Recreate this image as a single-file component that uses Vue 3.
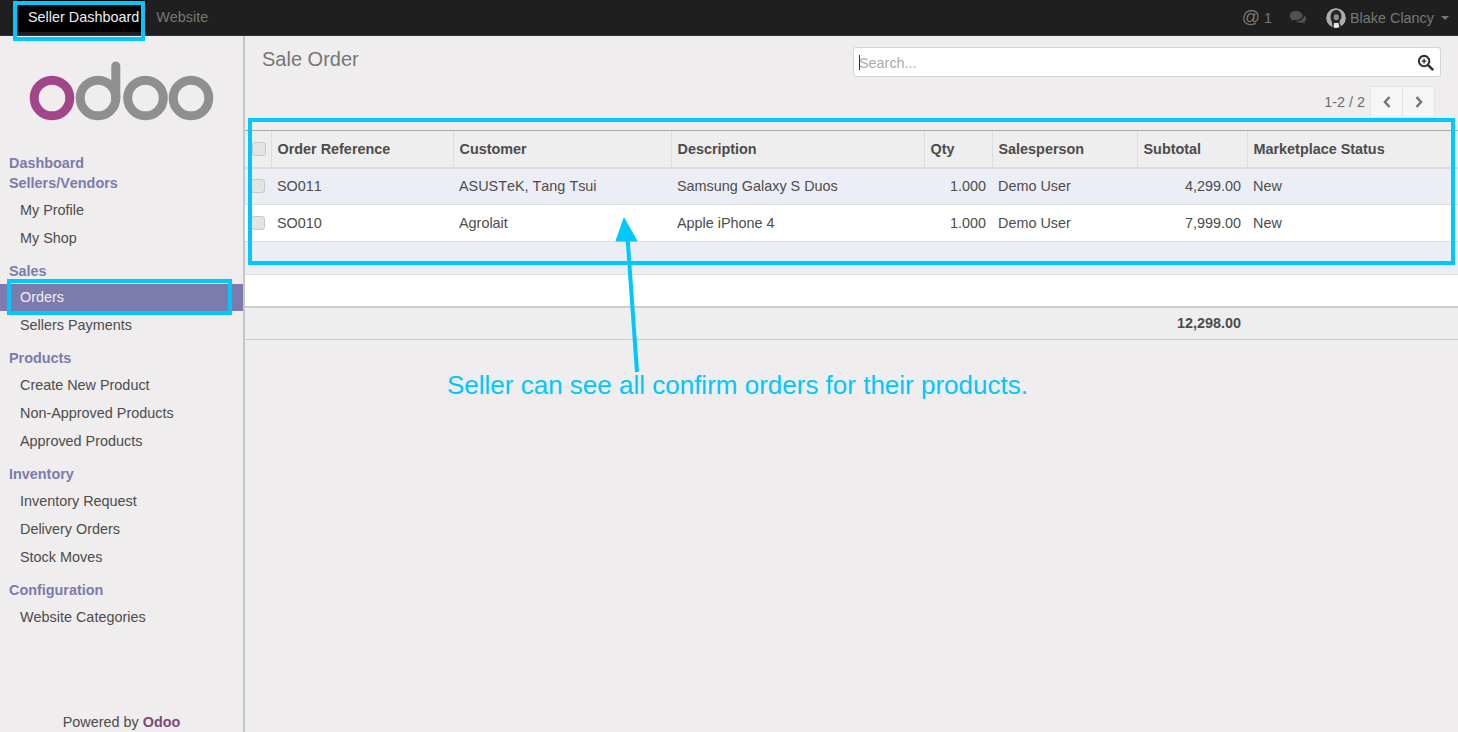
<template>
  <div class="page">
    <nav class="navbar">
      <div class="navleft">
        <a class="navitem active">Seller Dashboard</a>
        <a class="navitem">Website</a>
      </div>
      <div class="navright">
        <span class="mention"><span class="at">@</span> 1</span>
        <svg class="chat" viewBox="0 0 20 16" width="19" height="15">
          <path d="M7.500 1C3.600 1 .6 3.200.6 6c0 1.500.9 2.800 2.300 3.700-.2.800-.7 1.500-1.300 2.100 1.200-.1 2.300-.6 3.200-1.300.8.200 1.700.3 2.700.3 3.900 0 6.900-2.200 6.900-4.800S11.400 1 7.500 1z" fill="#525252"/>
          <path d="M15.700 5.200c.1.300.1.600.1.800 0 3.300-3.400 5.800-7.700 5.800h-.8c1.200 1.100 3 1.800 5 1.800.7 0 1.400-.1 2-.2.800.600 1.800 1 2.900 1.200-.5-.6-.9-1.200-1.100-1.900 1.300-.8 2.100-2 2.100-3.300 0-1.700-1-3.200-2.500-4.200z" fill="#525252"/>
        </svg>
        <span class="user">
          <svg class="avatar" viewBox="0 0 20 20" width="20" height="20">
            <circle cx="10" cy="10" r="10" fill="#a9adad"/>
            <path d="M4.500 9c0-4.500 3-7 5.800-7s5.500 2.500 5.200 7c-.2 1.500-1 2.500-1.500 3l-.5 3 2 4H6.500L6 14.500 5 12z" fill="#23262a"/>
            <ellipse cx="10.300" cy="9.300" rx="2.600" ry="3" fill="#8f8d8a"/>
            <path d="M8 15h4.500l1 5H7.500z" fill="#e8e8e8"/>
          </svg>
          Blake Clancy
          <i class="caret"></i>
        </span>
      </div>
    </nav>

    <div class="body">
      <aside class="sidebar">
        <svg class="logo" viewBox="0 0 243 90" width="243" height="90">
          <circle cx="52" cy="62" r="17.800" fill="none" stroke="#a24689" stroke-width="9"/>
          <circle cx="98" cy="62" r="17.800" fill="none" stroke="#8f8f8f" stroke-width="9"/>
          <path d="M115.800 62V30" fill="none" stroke="#8f8f8f" stroke-width="9" stroke-linecap="round"/>
          <circle cx="145.500" cy="62" r="17.800" fill="none" stroke="#8f8f8f" stroke-width="9"/>
          <circle cx="191" cy="62" r="17.800" fill="none" stroke="#8f8f8f" stroke-width="9"/>
        </svg>

        <div class="menu">
          <template v-for="group in menu" :key="group.title">
            <div class="menuhead" :class="{ tight: group.tight }">{{ group.title }}</div>
            <div
              v-for="item in group.items"
              :key="item"
              class="menuitem"
              :class="{ selected: item === 'Orders' }"
            >{{ item }}</div>
          </template>
        </div>

        <div class="powered">Powered by <b>Odoo</b></div>
      </aside>

      <main class="content">
        <div class="topbar">
          <h2 class="title">Sale Order</h2>
          <div class="controls">
            <div class="search">
              <span class="cursor"></span>
              <span class="placeholder">Search...</span>
              <svg class="lens" viewBox="0 0 18 18" width="17" height="17">
                <circle cx="7.500" cy="7.500" r="5.500" fill="none" stroke="#333" stroke-width="2.200"/>
                <path d="M11.800 11.800l4.500 4.500" stroke="#333" stroke-width="2.800" stroke-linecap="round"/>
                <path d="M5 7.500h5M7.500 5v5" stroke="#333" stroke-width="1.500"/>
              </svg>
            </div>
            <div class="pagerrow">
              <span class="pagecount">1-2 / 2</span>
              <div class="pagerbtns">
                <button class="pagerbtn">
                  <svg viewBox="0 0 10 14" width="10" height="14"><path d="M7.500 2L3 7l4.500 5" fill="none" stroke="#777" stroke-width="2.600"/></svg>
                </button>
                <button class="pagerbtn">
                  <svg viewBox="0 0 10 14" width="10" height="14"><path d="M2.500 2L7 7l-4.500 5" fill="none" stroke="#777" stroke-width="2.600"/></svg>
                </button>
              </div>
            </div>
          </div>
        </div>

        <table class="list">
          <colgroup>
            <col v-for="w in widths" :key="w" :style="{ width: w + 'px' }" />
            <col />
          </colgroup>
          <thead>
            <tr>
              <th class="check"><span class="box"></span></th>
              <th v-for="c in columns" :key="c">{{ c }}</th>
            </tr>
          </thead>
          <tbody>
            <tr v-for="o in orders" :key="o.ref" class="row">
              <td class="check"><span class="box"></span></td>
              <td>{{ o.ref }}</td>
              <td>{{ o.customer }}</td>
              <td>{{ o.description }}</td>
              <td class="num">{{ o.qty }}</td>
              <td>{{ o.salesperson }}</td>
              <td class="num">{{ o.subtotal }}</td>
              <td>{{ o.status }}</td>
            </tr>
            <tr class="blank"><td colspan="8"></td></tr>
            <tr class="blank white"><td colspan="8"></td></tr>
          </tbody>
          <tfoot>
            <tr>
              <td colspan="6"></td>
              <td class="num total">12,298.00</td>
              <td></td>
            </tr>
          </tfoot>
        </table>
      </main>
    </div>

    <!-- annotations drawn on top of the screenshot -->
    <div class="mark markbrand"></div>
    <div class="mark markorders"></div>
    <div class="mark marktable"></div>
    <svg class="arrow" viewBox="0 0 40 170" width="40" height="170">
      <path d="M6 31L14 8l13 23z" fill="#00c8ff" stroke="#00c8ff" stroke-width="1"/>
      <path d="M17.700 30L27 162" fill="none" stroke="#00c8ff" stroke-width="4"/>
    </svg>
    <div class="note">Seller can see all confirm orders for their products.</div>
  </div>
</template>

<script setup>
const menu = [
  { title: 'Dashboard', items: [], tight: true },
  { title: 'Sellers/Vendors', items: ['My Profile', 'My Shop'], tight: true },
  { title: 'Sales', items: ['Orders', 'Sellers Payments'] },
  { title: 'Products', items: ['Create New Product', 'Non-Approved Products', 'Approved Products'] },
  { title: 'Inventory', items: ['Inventory Request', 'Delivery Orders', 'Stock Moves'] },
  { title: 'Configuration', items: ['Website Categories'] }
]

const widths = [26, 182, 218, 253, 68, 145, 110]
const columns = ['Order Reference', 'Customer', 'Description', 'Qty', 'Salesperson', 'Subtotal', 'Marketplace Status']

const orders = [
  { ref: 'SO011', customer: 'ASUSTeK, Tang Tsui', description: 'Samsung Galaxy S Duos', qty: '1.000', salesperson: 'Demo User', subtotal: '4,299.00', status: 'New' },
  { ref: 'SO010', customer: 'Agrolait', description: 'Apple iPhone 4', qty: '1.000', salesperson: 'Demo User', subtotal: '7,999.00', status: 'New' }
]
</script>

<style>
html, body {
  margin: 0;
  height: 100%;
  overflow: hidden;
}
</style>

<style scoped>
.page {
  position: relative;
  width: 1458px;
  height: 732px;
  overflow: hidden;
  background: #efeded;
  font-family: "Liberation Sans", Arial, sans-serif;
  font-size: 14.400px;
  font-kerning: none;
  color: #4c4c4c;
}

.navbar {
  height: 36px;
  background: #1f1f1f;
  border-bottom: 1px solid #333;
  box-sizing: border-box;
  display: flex;
  justify-content: space-between;
}
.navleft {
  display: flex;
  padding-left: 18px;
}
.navitem {
  padding: 0 8px 0 9px;
  line-height: 35px;
  color: #777;
}
.navitem.active {
  padding-left: 10px;
  background: #000;
  color: #eee;
  height: 32px;
}
.navright {
  display: flex;
  align-items: center;
  color: #777;
  padding-right: 9px;
}
.mention {
  margin-right: 17px;
}
.at {
  font-size: 18px;
}
.chat {
  margin-right: 18px;
}
.user {
  display: flex;
  align-items: center;
  gap: 4px;
}
.avatar {
  border-radius: 50%;
}
.caret {
  width: 0;
  height: 0;
  margin-left: 3px;
  border-left: 4px solid transparent;
  border-right: 4px solid transparent;
  border-top: 4px solid #777;
}

.body {
  display: flex;
  height: 696px;
}
.sidebar {
  width: 245px;
  flex: none;
  box-sizing: border-box;
  border-right: 2px solid #c6c6c6;
  display: flex;
  flex-direction: column;
}
.logo {
  display: block;
  margin-bottom: 27px;
}
.menu {
  flex: 1;
}
.menuhead {
  font-weight: bold;
  color: #7c7bad;
  padding-left: 9px;
  line-height: 20px;
  margin-top: 9px;
  margin-bottom: 3px;
}
.menuhead.tight {
  margin-top: 0;
  margin-bottom: 0;
}
.menuitem {
  padding-left: 20px;
  height: 28px;
  line-height: 28px;
}
.menuhead.tight + .menuitem {
  margin-top: 3px;
}
.menuitem.selected {
  height: 27px;
  line-height: 27px;
  background: #7c7bad;
  color: #eee;
}
.powered {
  text-align: center;
  line-height: 20px;
  height: 20px;
}
.powered b {
  color: #7c4a77;
}

.content {
  flex: 1;
  min-width: 0;
}
.topbar {
  display: flex;
  justify-content: space-between;
  height: 94px;
}
.title {
  margin: 11px 0 0 17px;
  font-size: 20px;
  line-height: 24px;
  font-weight: normal;
  color: #777;
}
.controls {
  width: 588px;
  margin: 11px 17px 0 0;
}
.search {
  height: 30px;
  box-sizing: border-box;
  background: #fff;
  border: 1px solid #d4d4d4;
  border-radius: 3px;
  display: flex;
  align-items: center;
  padding: 0 6px 0 5px;
  color: #aaa;
}
.cursor {
  width: 1px;
  height: 15px;
  margin-right: -1px;
  background: #333;
}
.placeholder {
  flex: 1;
  padding-top: 1px;
}
.pagerrow {
  display: flex;
  justify-content: flex-end;
  align-items: center;
  gap: 6px;
  margin: 9px 6px 0 0;
}
.pagecount {
  color: #6f6a6a;
}
.pagerbtns {
  display: flex;
}
.pagerbtn {
  width: 33px;
  height: 32px;
  padding: 0;
  background: #f6f6f6;
  border: 1px solid #e4e4e4;
  margin-left: -1px;
  display: flex;
  align-items: center;
  justify-content: center;
}

.list {
  width: 100%;
  table-layout: fixed;
  border-collapse: collapse;
  font-size: 14.400px;
}
th {
  height: 37px;
  padding: 0 6px;
  text-align: left;
  background: #eee;
  color: #4c4c4c;
  border-top: 1px solid #aaa;
  border-bottom: 2px solid #ddd;
  border-left: 1px solid #ddd;
  box-sizing: border-box;
  white-space: nowrap;
}
th:first-child {
  border-left: none;
}
.row td {
  height: 37px;
  box-sizing: border-box;
  padding: 0 6px;
  border-bottom: 1px solid #ddd;
  white-space: nowrap;
}
.row:nth-child(odd) td {
  background: #eceef6;
}
.row:nth-child(even) td {
  background: #fff;
}
td.num {
  text-align: right;
}
.row td.check {
  padding: 0 0 0 6px;
}
th.check {
  padding: 0 0 0 7px;
}
.box {
  display: block;
  width: 12px;
  height: 12px;
  background: #e4e4e4;
  border: 1px solid #c8c8c8;
  border-radius: 3px;
}
.blank td {
  height: 33px;
  background: #eceef6;
  border-bottom: 1px solid #ddd;
  box-sizing: border-box;
  padding: 0;
}
.blank.white td {
  height: 32px;
  background: #fff;
  border-bottom: 2px solid #ccc;
}
tfoot td {
  height: 33px;
  background: #eee;
  border-bottom: 1px solid #ccc;
  box-sizing: border-box;
  padding: 0 6px;
}
.total {
  font-weight: bold;
}

.mark {
  position: absolute;
  box-sizing: border-box;
  border: 4px solid #00c8ff;
}
.markbrand {
  left: 13px;
  top: 1px;
  width: 132px;
  height: 40px;
}
.markorders {
  left: 7px;
  top: 279px;
  width: 225px;
  height: 36px;
}
.marktable {
  left: 248px;
  top: 118px;
  width: 1207px;
  height: 147px;
}
.arrow {
  position: absolute;
  left: 610px;
  top: 210px;
}
.note {
  position: absolute;
  left: 447px;
  top: 370px;
  font-size: 26px;
  line-height: 30px;
  color: #00c8ff;
  white-space: nowrap;
}
</style>
